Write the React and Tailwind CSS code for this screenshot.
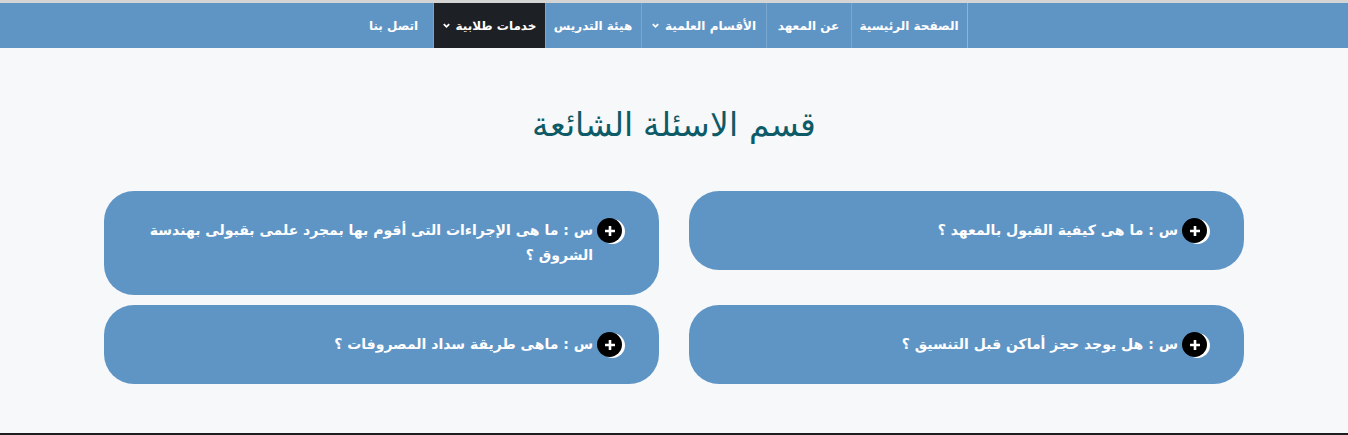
import React from "react";

const navItems = [
  { label: "الصفحة الرئيسية", w: "w-[116px]" },
  { label: "عن المعهد", w: "w-[85px]" },
  { label: "الأقسام العلمية", caret: true, w: "w-[125px]" },
  { label: "هيئة التدريس", w: "w-[96px]" },
  { label: "خدمات طلابية", caret: true, active: true, w: "w-[112px]" },
  { label: "اتصل بنا", last: true, w: "w-[78px]" },
];

const questions = [
  "س : ما هى كيفية القبول بالمعهد ؟",
  "س : ما هى الإجراءات التى أقوم بها بمجرد علمى بقبولى بهندسة الشروق ؟",
  "س : هل يوجد حجز أماكن قبل التنسيق ؟",
  "س : ماهى طريقة سداد المصروفات ؟",
];

function Caret() {
  return (
    <svg width="9" height="9" viewBox="0 0 10 10" className="mr-[5px]">
      <path d="M2 3.5 L5 6.5 L8 3.5" stroke="white" strokeWidth="2" fill="none" />
    </svg>
  );
}

function PlusIcon() {
  return (
    <span className="inline-flex shrink-0 items-center justify-center w-[25px] h-[25px] rounded-full bg-black shadow-[3px_1px_0_0_#ffffff] ml-[4px]">
      <svg width="14" height="14" viewBox="0 0 14 14">
        <path d="M7 2 V12 M2 7 H12" stroke="white" strokeWidth="2.6" />
      </svg>
    </span>
  );
}

function App() {
  return (
    <div
      dir="rtl"
      className="w-[1348px] h-[435px] bg-[#f7f8fa] border-t-[3px] border-[#d4d4d4] border-b-2 border-b-[#1b1d20] overflow-hidden"
      style={{ fontFamily: '"DejaVu Sans", "Noto Sans", sans-serif' }}
    >
      <nav className="h-[45px] bg-[#5f95c5] flex justify-center pr-[26px]">
        <ul className="flex border-r border-[#8db4d8]">
          {navItems.map((item) => (
            <li
              key={item.label}
              className={`${item.w} flex items-center justify-center text-[12px] font-bold text-white whitespace-nowrap ${
                item.active ? "bg-[#1d2024]" : ""
              } ${item.last ? "" : "border-l border-[#7aa7d0]"}`}
            >
              {item.label}
              {item.caret && <Caret />}
            </li>
          ))}
        </ul>
      </nav>

      <h1 className="text-center text-[33px] text-[#0d5b66] font-light mt-[54px] mb-[43px] leading-[46px]">
        قسم الاسئلة الشائعة
      </h1>

      <div className="w-[1140px] mx-auto grid grid-cols-2 gap-x-[30px] gap-y-[10px] items-start">
        {questions.map((q) => (
          <div
            key={q}
            className="bg-[#5f95c5] rounded-[30px] pr-[37px] pl-[40px] py-[27px] flex items-start"
          >
            <PlusIcon />
            <p className="text-white font-bold text-[14px] leading-[25px]">{q}</p>
          </div>
        ))}
      </div>
    </div>
  );
}

export default App;
